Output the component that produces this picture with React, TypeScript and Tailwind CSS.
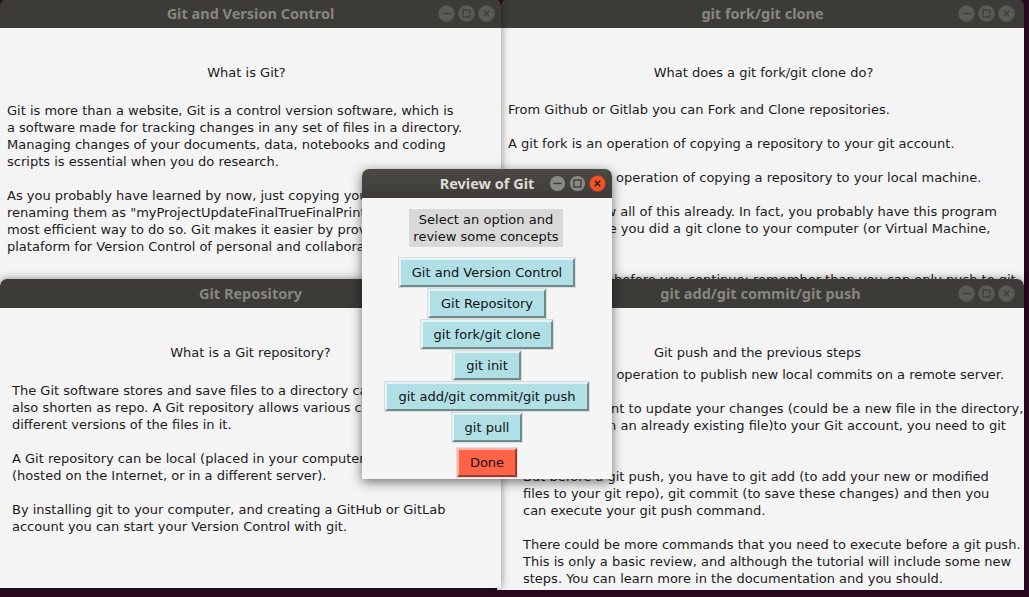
import React from "react";

type CtlProps = { active?: boolean; wide?: boolean };

function Controls({ active, wide }: CtlProps) {
  const fill = active ? "#8a8883" : "#5b5a55";
  const ring = active ? "#3a3935" : "#54534e";
  const ink = active ? "#3a3935" : "#3f3e3a";
  return (
    <div className={`absolute top-[6px] flex gap-[3px] ${wide ? "right-[9px]" : "right-[6px]"}`}>
      <svg width="17" height="17" viewBox="0 0 17 17">
        <circle cx="8.5" cy="8.5" r="8" fill={fill} stroke={ring} strokeWidth="0.8" />
        <line x1="4.5" y1="8.5" x2="12.5" y2="8.5" stroke={ink} strokeWidth="1.4" />
      </svg>
      <svg width="17" height="17" viewBox="0 0 17 17">
        <circle cx="8.5" cy="8.5" r="8" fill={fill} stroke={ring} strokeWidth="0.8" />
        <rect x="5" y="5" width="7" height="7" fill="none" stroke={ink} strokeWidth="1.3" />
      </svg>
      <svg width="17" height="17" viewBox="0 0 17 17">
        <circle
          cx="8.5"
          cy="8.5"
          r="8"
          fill={active ? "#e8562a" : fill}
          stroke={active ? "#a8391a" : ring}
          strokeWidth="0.8"
        />
        <path
          d="M5.8 5.8 L11.2 11.2 M11.2 5.8 L5.8 11.2"
          stroke={active ? "#3a1205" : ink}
          strokeWidth="1.3"
        />
      </svg>
    </div>
  );
}

function TitleBar({ title, active, wide }: { title: string; active?: boolean; wide?: boolean }) {
  return (
    <div
      className={`relative h-[29px] shrink-0 flex items-center justify-center rounded-t-[7px] ${
        active ? "bg-gradient-to-b from-[#4b4944] to-[#3d3c38]" : "bg-[#3c3b37]"
      }`}
    >
      <span
        className={`font-['Noto_Sans',sans-serif] font-bold text-[14.5px] leading-none ${
          active ? "text-[#dfdbd2]" : "text-[#87867f]"
        }`}
      >
        {title}
      </span>
      <Controls active={active} wide={wide} />
    </div>
  );
}

const body = "font-['DejaVu_Sans',sans-serif] text-[13px] leading-[17px] text-[#1b1b1b]";

function Win({
  className,
  title,
  heading,
  headingClass,
  lines,
  bodyClass,
  wide,
}: {
  className: string;
  title: string;
  heading: string;
  headingClass: string;
  lines: string[];
  bodyClass: string;
  wide?: boolean;
}) {
  return (
    <div className={`absolute flex flex-col rounded-t-[7px] shadow-[0_0_9px_rgba(0,0,0,0.45)] ${className}`}>
      <TitleBar title={title} wide={wide} />
      <div className={`flex-1 flex flex-col bg-[#f4f4f4] overflow-hidden ${body}`}>
        <div className={`text-center ${headingClass}`}>{heading}</div>
        <div className={`whitespace-pre ${bodyClass}`}>
          {lines.map((l, i) => (
            <div key={i} className="h-[17px]">
              {l}
            </div>
          ))}
        </div>
      </div>
    </div>
  );
}

function TkButton({ label, done }: { label: string; done?: boolean }) {
  return (
    <div
      className={`h-[29px] flex items-center px-[11px] border-2 shadow-[0_0_0_1px_#dcdcdc] ${
        done
          ? "bg-[#ff6347] border-t-[#ffb3a4] border-l-[#ffb3a4] border-b-[#9c3b2a] border-r-[#9c3b2a]"
          : "bg-[#b0e0e6] border-t-[#e4f4f6] border-l-[#e4f4f6] border-b-[#6e8b8e] border-r-[#6e8b8e]"
      }`}
    >
      <span className="text-[13px] leading-[17px] text-[#111]">{label}</span>
    </div>
  );
}

export default function App() {
  return (
    <div className="relative w-[1029px] h-[597px] overflow-hidden bg-[#2c0b22]">
      <Win
        className="left-[501px] top-[-1px] w-[523px] h-[310px]"
        wide
        title="git fork/git clone"
        heading="What does a git fork/git clone do?"
        headingClass="mt-[36px] pl-[2px]"
        bodyClass="mt-[20px] pl-[7px]"
        lines={[
          "From Github or Gitlab you can Fork and Clone repositories.",
          "",
          "A git fork is an operation of copying a repository to your git account.",
          "",
          "A git clone is an operation of copying a repository to your local machine.",
          "",
          "You should know all of this already. In fact, you probably have this program",
          "running because you did a git clone to your computer (or Virtual Machine,",
          "or server).",
          "",
          "One more thing before you continue: remember than you can only push to git",
          "repositories that you own or have access to.",
        ]}
      />
      <Win
        className="left-0 top-[-1px] w-[501px] h-[310px]"
        title="Git and Version Control"
        heading="What is Git?"
        headingClass="mt-[36px] pr-[8px]"
        bodyClass="mt-[21px] pl-[7px]"
        lines={[
          "Git is more than a website, Git is a control version software, which is",
          "a software made for tracking changes in any set of files in a directory.",
          "Managing changes of your documents, data, notebooks and coding",
          "scripts is essential when you do research.",
          "",
          "As you probably have learned by now, just copying your files and",
          'renaming them as "myProjectUpdateFinalTrueFinalPrint.docx" is not the',
          "most efficient way to do so. Git makes it easier by providing a",
          "plataform for Version Control of personal and collaborative projects.",
        ]}
      />
      <Win
        className="left-[497px] top-[279px] w-[527px] h-[311px]"
        wide
        title="git add/git commit/git push"
        heading="Git push and the previous steps"
        headingClass="mt-[36px] pr-[6px]"
        bodyClass="mt-[5px] pl-[26px]"
        lines={[
          "Git push is an operation to publish new local commits on a remote server.",
          "",
          "When you want to update your changes (could be a new file in the directory,",
          "or a change in an already existing file)to your Git account, you need to git",
          "push.",
          "",
          "But before a git push, you have to git add (to add your new or modified",
          "files to your git repo), git commit (to save these changes) and then you",
          "can execute your git push command.",
          "",
          "There could be more commands that you need to execute before a git push.",
          "This is only a basic review, and although the tutorial will include some new",
          "steps. You can learn more in the documentation and you should.",
        ]}
      />
      <Win
        className="left-0 top-[279px] w-[501px] h-[309px]"
        title="Git Repository"
        heading="What is a Git repository?"
        headingClass="mt-[36px]"
        bodyClass="mt-[21px] pl-[12px]"
        lines={[
          "The Git software stores and save files to a directory called repository,",
          "also shorten as repo. A Git repository allows various copies and",
          "different versions of the files in it.",
          "",
          "A Git repository can be local (placed in your computer) or remote",
          "(hosted on the Internet, or in a different server).",
          "",
          "By installing git to your computer, and creating a GitHub or GitLab",
          "account you can start your Version Control with git.",
        ]}
      />

      {/* Review dialog */}
      <div className="absolute left-[362px] top-[169px] w-[250px] h-[310px] flex flex-col rounded-t-[7px] shadow-[0_3px_12px_rgba(0,0,0,0.55)]">
        <TitleBar title="Review of Git" active />
        <div className="flex-1 flex flex-col items-center bg-[#f5f5f5] pt-[11px] font-['DejaVu_Sans',sans-serif]">
          <div className="bg-[#d9d9d9] w-[154px] py-[2px] text-center text-[13px] leading-[17px] text-[#111] -ml-[2px]">
            Select an option and
            <br />
            review some concepts
          </div>
          <div className="mt-[11px] flex flex-col items-center gap-[2px]">
            <TkButton label="Git and Version Control" />
            <TkButton label="Git Repository" />
            <TkButton label="git fork/git clone" />
            <TkButton label="git init" />
            <TkButton label="git add/git commit/git push" />
            <TkButton label="git pull" />
            <div className="mt-[4px]">
              <TkButton label="Done" done />
            </div>
          </div>
        </div>
      </div>
    </div>
  );
}
